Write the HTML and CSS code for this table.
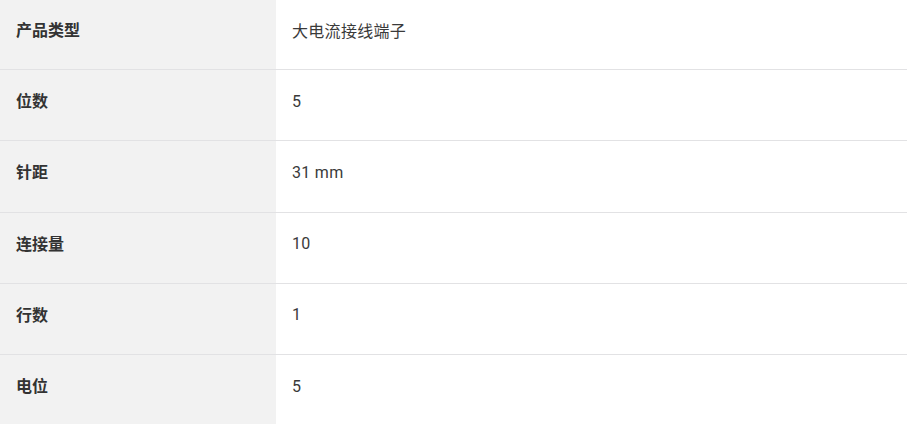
FILE: index.html
```html
<!DOCTYPE html>
<html lang="zh">
<head>
<meta charset="utf-8">
<link rel="stylesheet" href="styles.css">
</head>
<body>
<div class="spec">
  <div class="row"><div class="label">产品类型</div><div class="value">大电流接线端子</div></div>
  <div class="row"><div class="label">位数</div><div class="value">5</div></div>
  <div class="row"><div class="label">针距</div><div class="value">31 mm</div></div>
  <div class="row"><div class="label">连接量</div><div class="value">10</div></div>
  <div class="row"><div class="label">行数</div><div class="value">1</div></div>
  <div class="row last"><div class="label">电位</div><div class="value">5</div></div>
</div>
</body>
</html>
```
FILE: styles.css
```css
html, body {
  margin: 0;
  padding: 0;
  background: #ffffff;
  overflow: hidden;
}
.spec {
  width: 907px;
  margin-top: -1.25px;
}
.row {
  display: grid;
  grid-template-columns: 276px 1fr;
  height: 70.25px;
  border-bottom: 1px solid #e2e2e4;
}
.row.last {
  border-bottom: none;
}
.label, .value {
  display: flex;
  align-items: center;
  padding: 0 16px 10px 16px;
  color: #333333;
}
.label {
  background: #f2f2f2;
  font-family: "Noto Sans CJK SC", sans-serif;
  font-weight: 700;
  font-size: 16px;
}
.value {
  padding-bottom: 8px;
  font-family: Roboto, "Noto Sans CJK SC", sans-serif;
  font-size: 16px;
  letter-spacing: 0.3px;
  color: #3a3a3a;
}
```
